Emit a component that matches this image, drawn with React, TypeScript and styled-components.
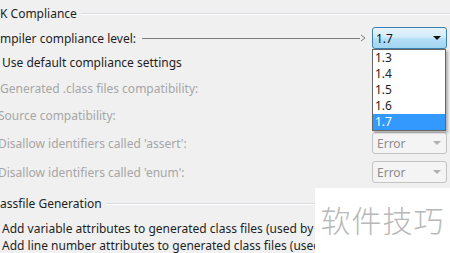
import React from 'react'
import styled, { createGlobalStyle } from 'styled-components'

const GlobalStyle = createGlobalStyle`
html, body {
  margin: 0;
  padding: 0;
  background: #f0f0f0;
}
body {
  font-family: "Noto Sans", "Open Sans", sans-serif;
  font-size: 12px;
  color: #1e1e1e;
}
`

const Page = styled.div`
position: relative;
width: 450px;
height: 253px;
box-sizing: border-box;
padding-top: 1px;
overflow: hidden;
background: #f0f0f0;
display: flex;
flex-direction: column;
& > * {
  flex-shrink: 0;
}
`

const Row = styled.div<{ $h: number }>`
height: ${p => p.$h}px;
display: grid;
grid-template-columns: 1fr 75px;
column-gap: 6px;
padding-right: 3px;
align-items: center;
`

const Label = styled.span<{ $disabled?: boolean; $shift?: number }>`
white-space: nowrap;
color: ${p => (p.$disabled ? '#a6a6a6' : '#1e1e1e')};
margin-left: ${p => p.$shift ?? 0}px;
`

const GroupTitle = styled.div<{ $h: number }>`
height: ${p => p.$h}px;
display: flex;
align-items: center;
gap: 4px;
white-space: nowrap;
`

const GroupLine = styled.div`
flex: 1;
height: 1px;
background: #d9dde1;
box-shadow: 0 1px 0 #ffffff;
`

const CheckRow = styled.div<{ $h: number }>`
height: ${p => p.$h}px;
width: 315px;
overflow: hidden;
display: flex;
align-items: center;
`

const LeadRow = styled.div`
display: flex;
align-items: center;
`

const Leader = styled.div`
flex: 1;
height: 1px;
margin-left: 6px;
background: #7a7a7a;
`

const ComboWrap = styled.div`
position: relative;
height: 22px;
`

const ActiveCombo = styled.div`
box-sizing: border-box;
height: 22px;
border: 1px solid #3c7fb1;
border-radius: 3px;
background: linear-gradient(#e6f4fc 0%, #d2ebf9 45%, #b3def6 55%, #a2d5f2 100%);
display: flex;
align-items: center;
justify-content: space-between;
padding: 0 5px 0 3px;
color: #111;
`

const DisabledCombo = styled.div`
box-sizing: border-box;
height: 22px;
border: 1px solid #c3c3c3;
border-radius: 3px;
background: #f4f4f4;
display: flex;
align-items: center;
justify-content: space-between;
padding: 0 5px 0 4px;
color: #8c8c8c;
`

const Caret = styled.span<{ $color: string }>`
width: 0;
height: 0;
border-left: 4px solid transparent;
border-right: 4px solid transparent;
border-top: 4px solid ${p => p.$color};
`

const DropList = styled.div`
position: absolute;
left: 0;
top: 22px;
width: 74px;
box-sizing: border-box;
background: #ffffff;
border: 1px solid #646464;
box-shadow: 2px 2px 2px rgba(0, 0, 0, 0.25);
padding: 0;
z-index: 2;
`

const DropItem = styled.div<{ $selected?: boolean }>`
height: 16px;
line-height: 16px;
padding-left: 2px;
color: ${p => (p.$selected ? '#ffffff' : '#1e1e1e')};
background: ${p => (p.$selected ? '#3399ff' : 'transparent')};
`

const Watermark = styled.div`
position: absolute;
left: 315px;
top: 188px;
right: 0;
bottom: 0;
background: #ffffff;
display: flex;
align-items: center;
justify-content: center;
font-family: "Noto Sans CJK SC", sans-serif;
font-size: 30px;
font-weight: 300;
color: #b8b8b8;
letter-spacing: 1px;
padding-bottom: 4px;
`

const ArrowHead = () => (
  <svg width="6" height="8" viewBox="0 0 6 8">
    <path d="M1 1 L5 4 L1 7" fill="none" stroke="#7a7a7a" strokeWidth="1" />
  </svg>
)

const levels = ['1.3', '1.4', '1.5', '1.6', '1.7']

export default function App() {
  return (
    <>
      <GlobalStyle />
      <Page>
        <GroupTitle $h={25}>
          <span>K Compliance</span>
          <GroupLine />
        </GroupTitle>

        <Row $h={24}>
          <LeadRow>
            <Label>mpiler compliance level:</Label>
            <Leader />
            <ArrowHead />
          </LeadRow>
          <ComboWrap>
            <ActiveCombo>
              <span>1.7</span>
              <Caret $color="#111" />
            </ActiveCombo>
            <DropList>
              {levels.map(l => (
                <DropItem key={l} $selected={l === '1.7'}>{l}</DropItem>
              ))}
            </DropList>
          </ComboWrap>
        </Row>

        <Row $h={24}>
          <Label $shift={2}>Use default compliance settings</Label>
        </Row>

        <Row $h={28}>
          <Label $disabled>Generated .class files compatibility:</Label>
        </Row>

        <Row $h={26}>
          <Label $disabled $shift={-2}>Source compatibility:</Label>
        </Row>

        <Row $h={30}>
          <Label $disabled $shift={-2}>Disallow identifiers called 'assert':</Label>
          <DisabledCombo>
            <span>Error</span>
            <Caret $color="#b0b0b0" />
          </DisabledCombo>
        </Row>

        <Row $h={28}>
          <Label $disabled $shift={-2}>Disallow identifiers called 'enum':</Label>
          <DisabledCombo>
            <span>Error</span>
            <Caret $color="#b0b0b0" />
          </DisabledCombo>
        </Row>

        <GroupTitle $h={34}>
          <span>assfile Generation</span>
          <GroupLine />
        </GroupTitle>

        <CheckRow $h={16}>
          <Label $shift={2}>Add variable attributes to generated class files (used by the debugger)</Label>
        </CheckRow>
        <CheckRow $h={18}>
          <Label $shift={2}>Add line number attributes to generated class files (used by the debugger)</Label>
        </CheckRow>

        <Watermark>软件技巧</Watermark>
      </Page>
    </>
  )
}
